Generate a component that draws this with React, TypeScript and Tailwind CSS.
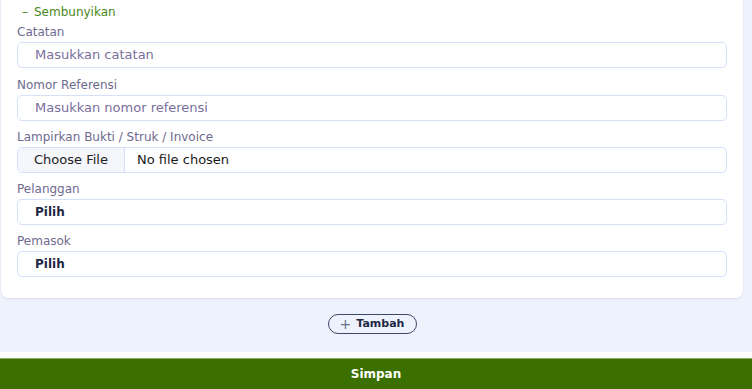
import React from "react";

const font = { fontFamily: '"DejaVu Sans", "Liberation Sans", Arial, sans-serif' };

function Label({ children }: { children: React.ReactNode }) {
  return <div className="text-[12px] leading-[14px] text-[#6e6a8f] mb-[3px]">{children}</div>;
}

function TextInput({ placeholder }: { placeholder: string }) {
  return (
    <div className="h-[26px] rounded-[5px] border border-[#d6e0fb] flex items-center pl-[17px] text-[13px] text-[#7a6f9c]">
      {placeholder}
    </div>
  );
}

function SelectBox() {
  return (
    <div className="h-[26px] rounded-[5px] border border-[#d6e0fb] flex items-center pl-[17px] text-[12px] font-bold text-[#1f2845]">
      Pilih
    </div>
  );
}

export default function App() {
  return (
    <div style={font} className="w-[752px] h-[389px] bg-[#eef2fd] flex flex-col overflow-hidden">
      <div className="ml-[1px] w-[742px] bg-white rounded-b-[7px] shadow-[0_1px_2px_rgba(0,0,0,0.08)] px-[16px] pt-[5px] pb-[21px]">
        <div className="pl-[5px] text-[12px] leading-[14px] text-[#4a8a1c] mb-[6px]">
          <span className="mr-[6px]">–</span>Sembunyikan
        </div>
        <Label>Catatan</Label>
        <TextInput placeholder="Masukkan catatan" />
        <div className="h-[10px]" />
        <Label>Nomor Referensi</Label>
        <TextInput placeholder="Masukkan nomor referensi" />
        <div className="h-[9px]" />
        <Label>Lampirkan Bukti / Struk / Invoice</Label>
        <div className="h-[26px] rounded-[5px] border border-[#d6e0fb] flex items-stretch text-[13px] text-[#1a1a1a] overflow-hidden">
          <div className="bg-[#f4f6fb] border-r border-[#d6e0fb] flex items-center px-[16px] text-[#222] w-[107px]">Choose File</div>
          <div className="flex items-center pl-[12px]">No file chosen</div>
        </div>
        <div className="h-[9px]" />
        <Label>Pelanggan</Label>
        <SelectBox />
        <div className="h-[9px]" />
        <Label>Pemasok</Label>
        <SelectBox />
      </div>
      <div className="w-[744px] flex justify-center mt-[16px]">
        <div className="h-[20px] w-[89px] rounded-full border border-[#3d4766] flex items-center justify-center gap-[5px] text-[11px] font-bold text-[#1f2845]">
          <span className="font-normal text-[#6a7388] text-[14px] leading-none">+</span>Tambah
        </div>
      </div>
      <div className="flex-1" />
      <div className="h-[6px] bg-white" />
      <div className="h-[31px] bg-[#3b7000] border-t border-[#8fb070] flex items-center justify-center text-white font-bold text-[12px]">
        Simpan
      </div>
    </div>
  );
}
